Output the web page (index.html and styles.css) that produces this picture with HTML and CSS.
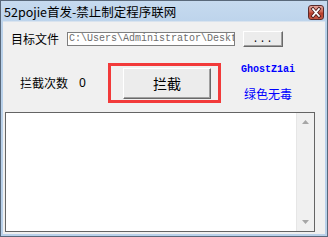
FILE: index.html
```html
<!DOCTYPE html>
<html>
<head>
<meta charset="utf-8">
<link rel="stylesheet" href="styles.css">
</head>
<body>
<div class="window">
  <div class="titlebar">
    <span class="title">52pojie首发-禁止制定程序联网</span>
    <span class="close">
      <svg width="16" height="15" viewBox="0 0 16 15">
        <path d="M5 4 L11 11 M11 4 L5 11" stroke="#4a1a1a" stroke-width="3.4" stroke-linecap="square"/>
        <path d="M5 4 L11 11 M11 4 L5 11" stroke="#ffffff" stroke-width="1.8" stroke-linecap="square"/>
      </svg>
    </span>
  </div>
  <div class="client">
    <div class="row1">
      <span class="label">目标文件</span>
      <span class="field"><span class="field-text">C:\Users\Administrator\Deskt</span></span>
      <span class="btn small">...</span>
    </div>
    <div class="row2">
      <span class="label">拦截次数</span>
      <span class="count">0</span>
      <div class="highlight">
        <span class="btn big">拦截</span>
      </div>
      <div class="credits">
        <span class="ghost">GhostZ1ai</span>
        <span class="green">绿色无毒</span>
      </div>
    </div>
    <div class="list">
      <div class="list-body"></div>
      <div class="scrollbar">
        <svg class="arrow" width="7" height="4" viewBox="0 0 7 4"><path d="M3.5 0 L7 4 L0 4 Z" fill="#a6a6a6"/></svg>
        <svg class="arrow" width="7" height="4" viewBox="0 0 7 4"><path d="M0 0 L7 0 L3.5 4 Z" fill="#a6a6a6"/></svg>
      </div>
    </div>
  </div>
</div>
</body>
</html>
```
FILE: styles.css
```css
html, body {
  margin: 0;
  padding: 0;
  background: #ffffff;
}
.window {
  width: 328px;
  height: 237px;
  box-sizing: border-box;
  border: 1px solid #59687a;
  background: linear-gradient(#c6daef, #b9d1ea 30px);
  padding: 0 2px 2px 2px;
  display: flex;
  flex-direction: column;
  font-family: "Noto Sans CJK SC", "Noto Sans", sans-serif;
}
.titlebar {
  height: 20px;
  box-sizing: border-box;
  padding: 2px 3px 0 3px;
  display: flex;
  align-items: center;
  margin: 0 -2px;
}
.title {
  font-size: 12.5px;
  color: #000000;
  line-height: 14px;
  white-space: nowrap;
}
.close {
  margin-left: auto;
  width: 16px;
  height: 15px;
  box-sizing: border-box;
  border: 1px solid #5a2a2a;
  border-radius: 3px;
  background: linear-gradient(#e3a69c, #cd6452 45%, #b83d2b 55%, #c75a45);
  display: flex;
  align-items: center;
  justify-content: center;
}
.close svg {
  display: block;
  margin: -1px;
}
.client {
  flex: 1;
  background: #f0f0f0;
  display: flex;
  flex-direction: column;
  border-top: 1px solid #d9e3ee;
}
.label {
  font-size: 12px;
  line-height: 14px;
  color: #000000;
  white-space: nowrap;
}
.row1 {
  margin-top: 9px;
  height: 16px;
  display: flex;
  align-items: center;
  padding-left: 8px;
}
.field {
  margin-left: 8px;
  width: 168px;
  height: 14px;
  box-sizing: border-box;
  border: 1px solid #7e7e7e;
  background: #ffffff;
  padding-left: 1px;
  overflow: hidden;
  display: flex;
  align-items: center;
}
.field-text {
  font-family: "Liberation Mono", "DejaVu Sans Mono", monospace;
  font-size: 10px;
  line-height: 12px;
  color: #6d6d6d;
  white-space: nowrap;
  flex: none;
}
.btn {
  box-sizing: border-box;
  background: #ececec;
  border-top: 1px solid #ffffff;
  border-left: 1px solid #ffffff;
  border-right: 1px solid #696969;
  border-bottom: 1px solid #696969;
  box-shadow: inset -1px -1px 0 #a0a0a0;
  display: flex;
  align-items: center;
  justify-content: center;
  color: #000000;
}
.btn.small {
  margin-left: 8px;
  width: 40px;
  height: 16px;
  font-family: "Liberation Mono", monospace;
  font-size: 10px;
  letter-spacing: 1px;
  padding-top: 1px;
}
.row2 {
  margin-top: 16px;
  display: flex;
  align-items: flex-start;
  padding-left: 17px;
}
.row2 .label {
  margin-top: 13px;
}
.count {
  margin-top: 13px;
  margin-left: 11px;
  font-size: 12px;
  line-height: 14px;
  font-family: "Noto Sans", sans-serif;
  width: 7px;
}
.highlight {
  margin-left: 22px;
  width: 113px;
  height: 40px;
  box-sizing: border-box;
  border: 3px solid #f23a3a;
  padding: 2px 6px 0 12px;
}
.btn.big {
  width: 88px;
  height: 31px;
  font-size: 14px;
  padding-bottom: 1px;
}
.credits {
  margin-left: 18px;
  width: 58px;
  display: flex;
  flex-direction: column;
  align-items: center;
  color: #0000ff;
}
.ghost {
  margin-top: 1px;
  font-family: "Liberation Mono", monospace;
  font-weight: bold;
  font-size: 10px;
  line-height: 12px;
}
.green {
  margin-top: 11px;
  font-size: 12px;
  line-height: 14px;
}
.list {
  margin-top: 9px;
  margin-left: 2px;
  width: 310px;
  height: 120px;
  box-sizing: border-box;
  border: 1px solid #646464;
  background: #ffffff;
  display: flex;
}
.list-body {
  flex: 1;
}
.scrollbar {
  width: 17px;
  background: #f0f0f0;
  border-left: 1px solid #e6e6e6;
  display: flex;
  flex-direction: column;
  align-items: center;
  justify-content: space-between;
  padding: 7px 0 7px 0;
}
.arrow {
  display: block;
}
```
